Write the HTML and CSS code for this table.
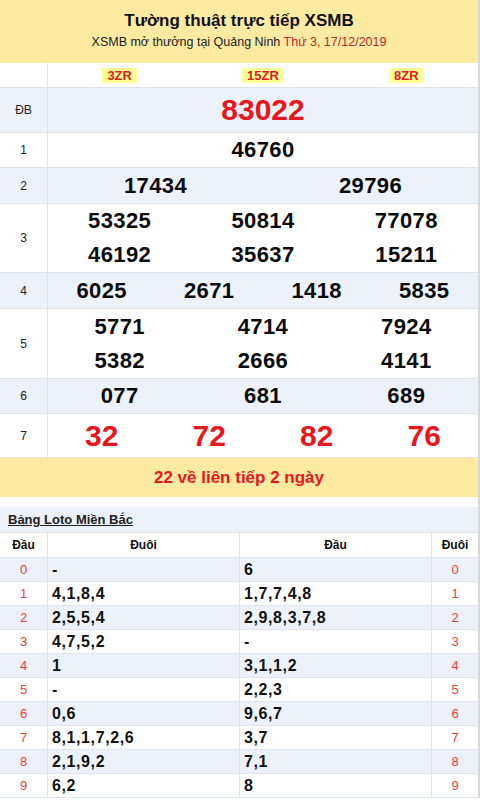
FILE: index.html
```html
<!DOCTYPE html>
<html lang="vi">
<head>
<meta charset="utf-8">
<title>XSMB</title>
<link rel="stylesheet" href="styles.css">
</head>
<body>
<div class="page">
  <header class="head">
    <h1 class="title">Tường thuật trực tiếp XSMB</h1>
    <p class="sub">XSMB mở thưởng tại Quảng Ninh <span class="date">Thứ 3, 17/12/2019</span></p>
  </header>

  <div class="results">
    <div class="row r-codes">
      <div class="lbl"></div>
      <div class="cells c3">
        <span><b class="code">3ZR</b></span>
        <span><b class="code">15ZR</b></span>
        <span><b class="code">8ZR</b></span>
      </div>
    </div>
    <div class="row alt r-db">
      <div class="lbl">ĐB</div>
      <div class="cells c1"><span class="big">83022</span></div>
    </div>
    <div class="row r-35">
      <div class="lbl">1</div>
      <div class="cells c1"><span class="num">46760</span></div>
    </div>
    <div class="row alt r-36">
      <div class="lbl">2</div>
      <div class="cells c2"><span class="num">17434</span><span class="num">29796</span></div>
    </div>
    <div class="row r-69">
      <div class="lbl">3</div>
      <div class="cells c3 two">
        <span class="num">53325</span><span class="num">50814</span><span class="num">77078</span>
        <span class="num">46192</span><span class="num">35637</span><span class="num">15211</span>
      </div>
    </div>
    <div class="row alt r-36">
      <div class="lbl">4</div>
      <div class="cells c4"><span class="num">6025</span><span class="num">2671</span><span class="num">1418</span><span class="num">5835</span></div>
    </div>
    <div class="row r-70">
      <div class="lbl">5</div>
      <div class="cells c3 two">
        <span class="num">5771</span><span class="num">4714</span><span class="num">7924</span>
        <span class="num">5382</span><span class="num">2666</span><span class="num">4141</span>
      </div>
    </div>
    <div class="row alt r-35">
      <div class="lbl">6</div>
      <div class="cells c3"><span class="num">077</span><span class="num">681</span><span class="num">689</span></div>
    </div>
    <div class="row r-44">
      <div class="lbl">7</div>
      <div class="cells c4"><span class="big">32</span><span class="big">72</span><span class="big">82</span><span class="big">76</span></div>
    </div>
  </div>

  <div class="streak">22 về liên tiếp 2 ngày</div>

  <div class="loto-title"><span>Bảng Loto Miền Bắc</span></div>

  <div class="loto">
    <div class="lr lh"><span>Đầu</span><span>Đuôi</span><span>Đầu</span><span>Đuôi</span></div>
    <div class="lr alt"><span class="ix">0</span><span>-</span><span>6</span><span class="ix">0</span></div>
    <div class="lr"><span class="ix">1</span><span>4,1,8,4</span><span>1,7,7,4,8</span><span class="ix">1</span></div>
    <div class="lr alt"><span class="ix">2</span><span>2,5,5,4</span><span>2,9,8,3,7,8</span><span class="ix">2</span></div>
    <div class="lr"><span class="ix">3</span><span>4,7,5,2</span><span>-</span><span class="ix">3</span></div>
    <div class="lr alt"><span class="ix">4</span><span>1</span><span>3,1,1,2</span><span class="ix">4</span></div>
    <div class="lr"><span class="ix">5</span><span>-</span><span>2,2,3</span><span class="ix">5</span></div>
    <div class="lr alt"><span class="ix">6</span><span>0,6</span><span>9,6,7</span><span class="ix">6</span></div>
    <div class="lr"><span class="ix">7</span><span>8,1,1,7,2,6</span><span>3,7</span><span class="ix">7</span></div>
    <div class="lr alt"><span class="ix">8</span><span>2,1,9,2</span><span>7,1</span><span class="ix">8</span></div>
    <div class="lr"><span class="ix">9</span><span>6,2</span><span>8</span><span class="ix">9</span></div>
  </div>
</div>
</body>
</html>
```

FILE: styles.css
```css
* { box-sizing: border-box; }
html, body { margin: 0; padding: 0; background: #fff; }
body {
  font-family: "Liberation Sans", Arial, sans-serif;
  color: #111;
  width: 480px;
}
.page {
  width: 480px;
  border-right: 2px solid #d9d9d9;
}

/* header */
.head {
  background: #ffeaa1;
  height: 63px;
  padding-top: 10px;
  text-align: center;
}
.title {
  margin: 0;
  font-size: 17px;
  line-height: 22px;
  font-weight: bold;
  color: #111;
}
.sub {
  margin: 0;
  font-size: 12.5px;
  line-height: 20px;
  color: #222;
}
.date { color: #b22b2b; }

/* results table */
.row {
  display: grid;
  grid-template-columns: 48px 1fr;
  border-top: 1px solid #dfe4ec;
  background: #fff;
}
.row.alt { background: #edf1f9; }
.lbl {
  border-right: 1px solid #dfe4ec;
  font-size: 12px;
  color: #222;
  display: flex;
  align-items: center;
  justify-content: center;
}
.cells {
  display: grid;
  align-items: center;
  justify-items: center;
}
.c1 { grid-template-columns: 1fr; }
.c2 { grid-template-columns: 1fr 1fr; }
.c3 { grid-template-columns: repeat(3, 1fr); }
.c4 { grid-template-columns: repeat(4, 1fr); }
.two { grid-auto-rows: 34px; align-content: center; }

.r-codes { height: 24px; border-top: 0; }
.r-db { height: 45px; }
.r-35 { height: 35px; }
.r-36 { height: 36px; }
.r-69 { height: 69px; }
.r-70 { height: 70px; }
.r-44 { height: 44px; }

.code {
  display: inline-block;
  background: #ffff94;
  color: #e3191f;
  font-size: 13px;
  line-height: 15px;
  padding: 0 5px;
  border-radius: 2px;
}
.num {
  font-size: 22px;
  font-weight: bold;
  letter-spacing: 0.4px;
  color: #0b0b0b;
}
.big {
  font-size: 30px;
  font-weight: bold;
  color: #e8161e;
}

/* streak */
.streak {
  background: #ffeaa1;
  color: #e8161e;
  font-size: 17px;
  font-weight: bold;
  text-align: center;
  height: 40px;
  line-height: 39px;
  border-top: 1px solid #dfe4ec;
}

/* loto */
.loto-title {
  margin-top: 10px;
  background: #edf1f9;
  height: 26px;
  padding-left: 8px;
  display: flex;
  align-items: center;
  border-bottom: 1px solid #dfe4ec;
}
.loto-title span {
  font-size: 13px;
  font-weight: bold;
  text-decoration: underline;
  color: #222;
}
.lr {
  display: grid;
  grid-template-columns: 48px 192px 192px 1fr;
  height: 24px;
  border-bottom: 1px solid #dfe4ec;
  background: #fff;
}
.lr.alt { background: #edf1f9; }
.lr > span {
  display: flex;
  align-items: center;
  padding-left: 4px;
  font-size: 16px;
  font-weight: bold;
  letter-spacing: 0.6px;
  border-right: 1px solid #dfe4ec;
}
.lr > span:last-child { border-right: 0; }
.lr > span.ix {
  justify-content: center;
  padding-left: 0;
  font-size: 13px;
  font-weight: normal;
  letter-spacing: 0;
  color: #f23a43;
}
.lr.lh { height: 25px; }
.lh > span {
  justify-content: center;
  padding-left: 0;
  font-size: 12px;
  letter-spacing: 0;
  color: #111;
}
```
